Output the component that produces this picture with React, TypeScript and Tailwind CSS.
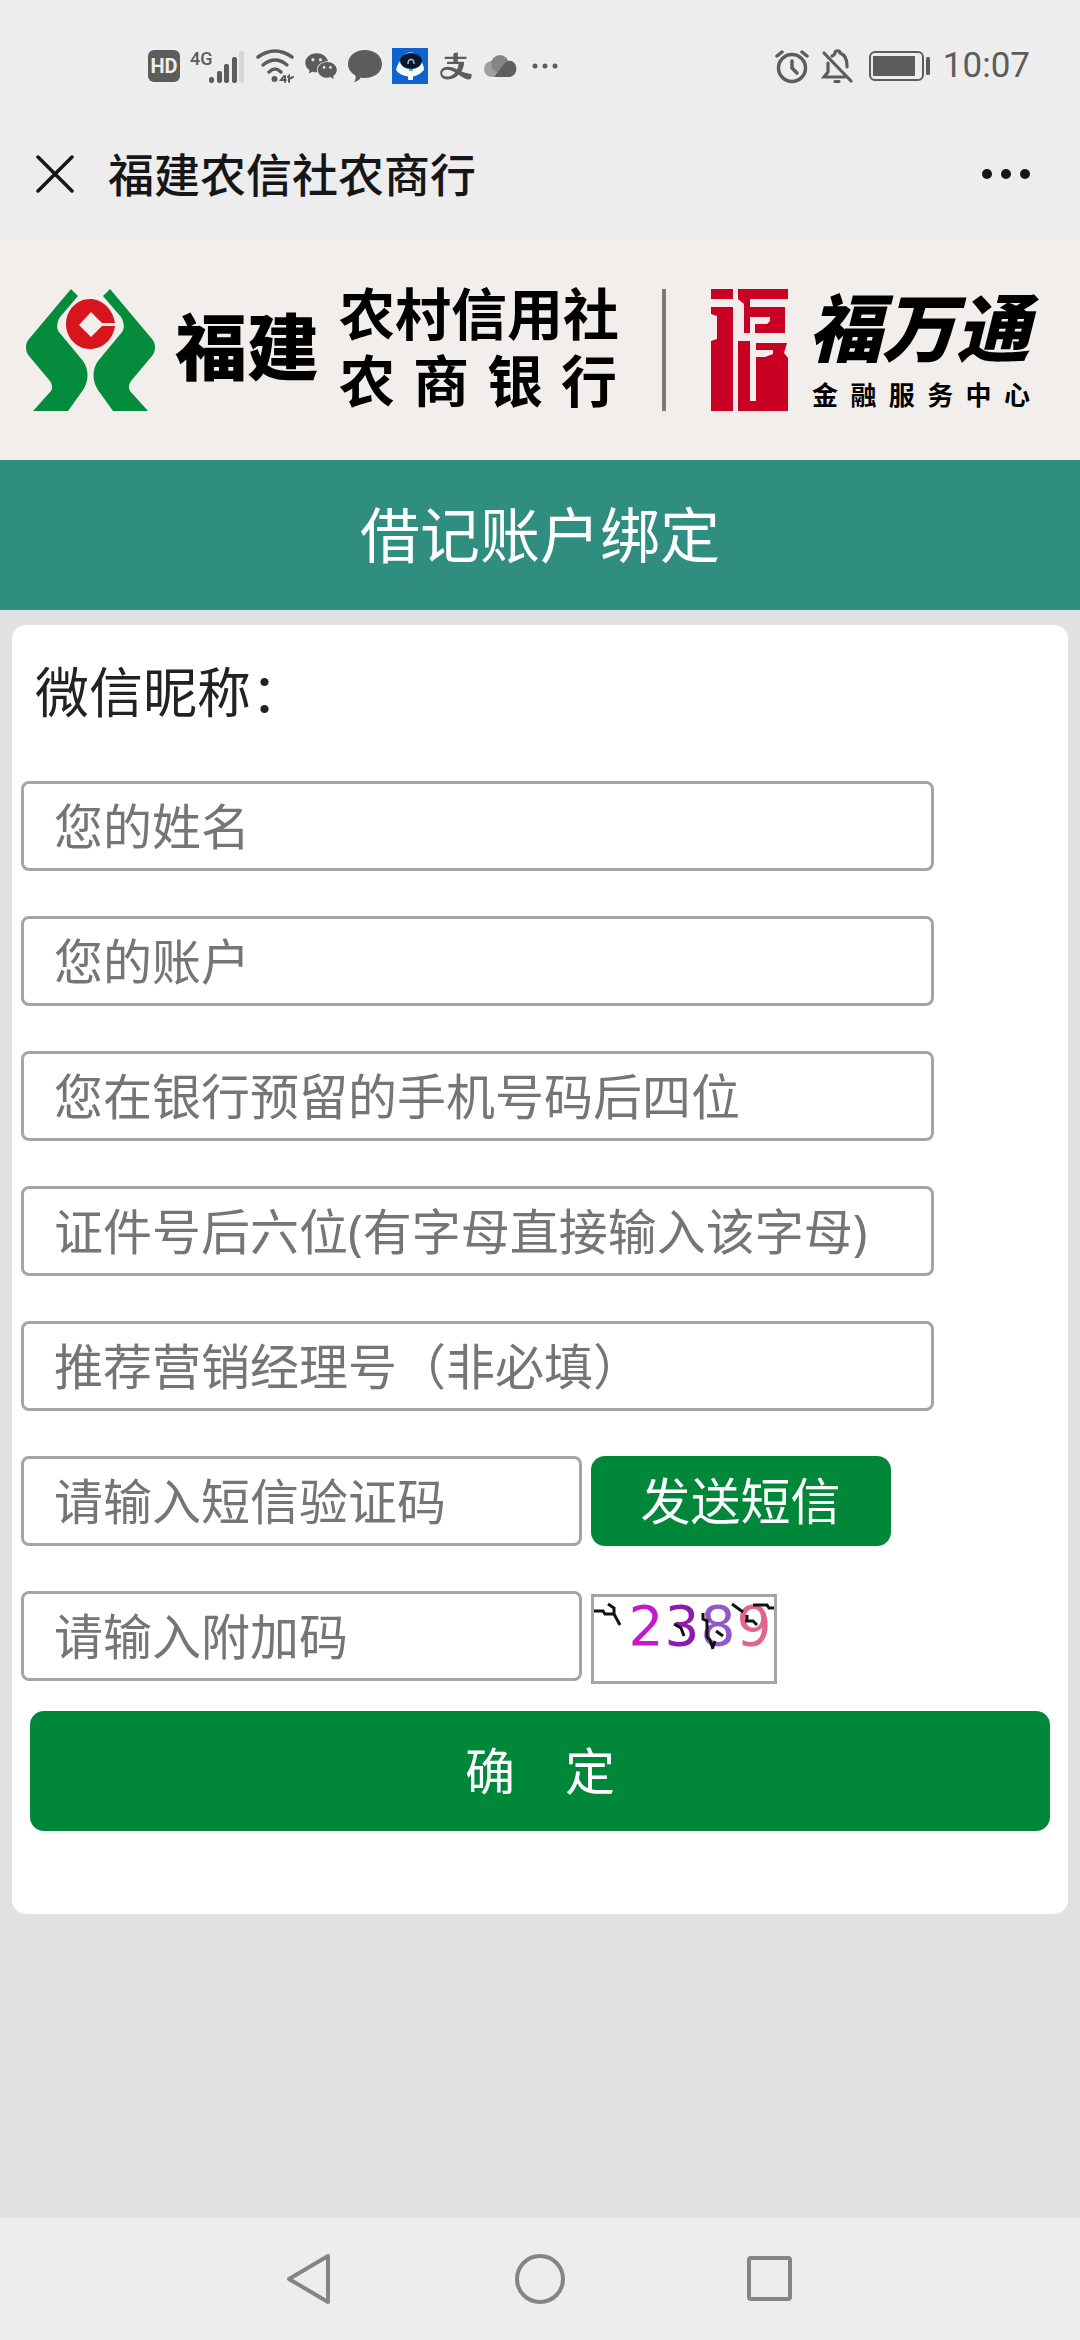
import { AiFillWechat, AiOutlineAlipay } from 'react-icons/ai'

const fields = [
  { id: 'name', placeholder: '您的姓名' },
  { id: 'account', placeholder: '您的账户' },
  { id: 'phone', placeholder: '您在银行预留的手机号码后四位' },
  { id: 'idcard', placeholder: '证件号后六位(有字母直接输入该字母)' },
  { id: 'manager', placeholder: '推荐营销经理号（非必填）' },
]

const inputClass =
  'h-[90px] rounded-lg border-[3px] border-[#a5a5a5] bg-white pl-[30px] pr-3 text-[49px] text-[#222] placeholder:text-[#757575] placeholder:opacity-100 outline-none'

function StatusBar() {
  return (
    <div className="flex h-[132px] items-center justify-between pl-[148px] pr-[50px] text-[#5c5c5c]">
      <div className="flex items-center gap-[10px]">
        <span className="flex h-8 w-8 items-center justify-center rounded-md bg-[#5c5c5c] font-['Roboto'] text-xl font-bold text-[#eee]">HD</span>
        {/* network type and signal */}
        <svg width="56" height="36" viewBox="0 0 56 36" fill="currentColor">
          <text x="0" y="17" fontFamily="Roboto" fontSize="18" fontWeight="500">4G</text>
          <rect x="19" y="29" width="5" height="6" rx="2" />
          <rect x="27" y="23" width="5" height="12" rx="2" />
          <rect x="34" y="16" width="5" height="19" rx="2" />
          <rect x="42" y="9" width="5" height="26" rx="2" />
          <rect x="49" y="3" width="5" height="32" rx="2" fill="#d6d6d6" />
        </svg>
        {/* wifi */}
        <svg width="38" height="36" viewBox="0 0 38 36" fill="none" stroke="currentColor" strokeWidth="3.5" strokeLinecap="round">
          <path d="M2 9 Q19 -3 36 9" />
          <path d="M7 17 Q19 7 31 17" />
          <path d="M13 24 Q19 18 25 24" />
          <circle cx="18.500" cy="31" r="3" fill="currentColor" stroke="none" />
          <path d="M28 28 l-3 4 h5 M29 28 v6 M33 34 v-6 l-1 1 M33 31 l4 -2" strokeWidth="2" />
        </svg>
        <AiFillWechat size={36} className="-mx-px" />
        {/* message bubble */}
        <svg width="34" height="34" viewBox="0 0 34 34" fill="currentColor">
          <path d="M17 1 C26 1 34 6.500 34 15 C34 23.500 26 29 17 29 C15 29 14 29 13 28.500 C11 31 9 32.500 6 33 C7.500 31 8 29 7.500 26.500 C3 24 0 20 0 15 C0 6.500 8 1 17 1 Z" />
        </svg>
        {/* robot app */}
        <svg width="36" height="36" viewBox="0 0 36 36">
          <rect width="36" height="36" fill="#0e63cf" />
          <path d="M9 12 C11 2 26 2 28 12 C31 15 32 19 32 22 C28 26 25 28 21 28.500 V32 H16 V28.500 C11 28 7 26 4 22 C5 18 6 15 9 12 Z" fill="#f4fbff" />
          <ellipse cx="19" cy="13" rx="11" ry="8" fill="#06182c" />
          <path d="M16 16 C16 10 22 10 22 16" fill="none" stroke="#9dbad5" strokeWidth="1.500" />
          <path d="M17 21 H21 V23 H17 Z" fill="#3fc6a8" />
        </svg>
        <AiOutlineAlipay size={36} />
        {/* cloud */}
        <svg width="34" height="24" viewBox="0 0 34 24">
          <circle cx="8" cy="15" r="8" fill="#a0a0a0" />
          <circle cx="16" cy="10" r="9" fill="#858585" />
          <path d="M10 23 L20 10 C27 2 34 10 32 17 C31 21 28 23 24 23 Z" fill="#5f5f5f" />
        </svg>
        <svg width="32" height="10" viewBox="0 0 32 10" fill="currentColor">
          <circle cx="7" cy="5" r="2.500" />
          <circle cx="17" cy="5" r="2.500" />
          <circle cx="27" cy="5" r="2.500" />
        </svg>
      </div>
      <div className="flex items-center gap-3">
        {/* alarm */}
        <svg width="34" height="36" viewBox="0 0 34 36" fill="none" stroke="currentColor" strokeWidth="3.5" strokeLinecap="round">
          <circle cx="17" cy="20" r="13.500" />
          <path d="M17 13 V20 L22 25" />
          <path d="M2 8 L7 4 M32 8 L27 4" />
        </svg>
        {/* muted bell */}
        <svg width="36" height="36" viewBox="0 0 36 36" fill="none" stroke="currentColor" strokeWidth="3.2" strokeLinecap="round">
          <path d="M3 5 L30 33" />
          <path d="M11 8 C13 7 14 6 14 5 C14 2 19 2 19 5 C24 7 26 11 26 17 V19" />
          <path d="M7 15 V24 L3 29 H24" />
          <path d="M14 33.500 H18" />
        </svg>
        {/* battery */}
        <svg width="62" height="30" viewBox="0 0 62 30">
          <rect x="1" y="1" width="53" height="28" rx="5" fill="none" stroke="currentColor" strokeWidth="2" />
          <rect x="4" y="5" width="42" height="20" fill="currentColor" />
          <rect x="57" y="6" width="4" height="18" rx="1.500" fill="currentColor" />
        </svg>
        <span className="font-['Roboto'] text-[35px]">10:07</span>
      </div>
    </div>
  )
}

function TitleBar() {
  return (
    <header className="flex h-[108px] items-center pb-6 pl-9 pr-[49px] text-[#161616]">
      <button type="button" aria-label="关闭">
        <svg width="38" height="38" viewBox="0 0 38 38" stroke="currentColor" strokeWidth="3.500" strokeLinecap="round">
          <path d="M2 2 L36 36 M36 2 L2 36" />
        </svg>
      </button>
      <h1 className="ml-[34px] flex-1 text-[46px] font-medium leading-[60px]">福建农信社农商行</h1>
      <button type="button" aria-label="更多">
        <svg width="50" height="12" viewBox="0 0 50 12" fill="currentColor">
          <circle cx="6" cy="6" r="5" />
          <circle cx="25" cy="6" r="5" />
          <circle cx="44" cy="6" r="5" />
        </svg>
      </button>
    </header>
  )
}

function SpreadText({ text }: { text: string }) {
  return (
    <div className="flex justify-between">
      {text.split('').map((char, i) => (
        <span key={i}>{char}</span>
      ))}
    </div>
  )
}

function Banner() {
  const hand = 'M45 0 L52 7 L34 28 C31 33 30 39 33 43 L57 72 C63 80 63 92 57 101 L42 122 H7 L25 102 C27 99 26 95 24 92 L3 67 C-1 62 -1 54 3 50 Z'
  return (
    <div className="flex h-[220px] items-center bg-[#f2eeeb] pl-[26px] font-['Liberation_Serif','Noto_Sans_CJK_SC',serif] text-black">
      <svg width="129" height="122" viewBox="0 0 129 122" className="shrink-0">
        <path d={hand} fill="#048b3c" />
        <path d={hand} fill="#048b3c" transform="translate(129 0) scale(-1 1)" />
        <path d="M89 34 C87 20 76 10 64 10 C51 10 40 21 40 35 C40 49 51 60 64 60 C76 60 87 51 89 37 H76 L65 48 L53 36 L65 23 L76 34 Z" fill="#d8151c" />
      </svg>
      <p className="ml-5 shrink-0 text-[72px] font-black leading-[80px]">福建</p>
      <div className="ml-5 flex w-[278px] shrink-0 flex-col text-[56px] font-bold leading-[67px]">
        <SpreadText text="农村信用社" />
        <SpreadText text="农商银行" />
      </div>
      <div className="ml-[45px] h-[122px] w-1 shrink-0 bg-[#7b7b78]" />
      <svg width="77" height="122" viewBox="0 0 77 122" fill="#c90024" className="ml-[45px] shrink-0">
        <path d="M0 0 H22 V10 H0 Z" />
        <path d="M0 18 H22 V122 H0 V52 L6 50 V27 L0 25 Z" />
        <path d="M27 0 H77 V10 H39 V18 H74 V44 H44 V35 H56 L59 32 V28 H39 V44 H33 V15 L27 10 Z" />
        <path d="M27 52 H39 V112 H45 V68 H54 L62 65 V61 H45 V54 H76 L73 64 L77 69 V122 H27 Z" />
      </svg>
      <div className="ml-5 flex w-[226px] shrink-0 flex-col gap-2">
        <p className="text-[74px] font-black italic leading-[84px]">福万通</p>
        <div className="px-1 text-[26px] font-bold leading-[31px]">
          <SpreadText text="金融服务中心" />
        </div>
      </div>
    </div>
  )
}

function Captcha() {
  return (
    <button type="button" aria-label="刷新附加码" className="relative mt-[3px] flex h-[90px] w-[186px] items-start gap-px border-[3px] border-[#a5a5a5] bg-white pl-[35px] font-['DejaVu_Sans'] text-[55px] leading-[58px]">
      <span className="text-[#c716cb]">2</span>
      <span className="text-[#8d1bab]">3</span>
      <span className="text-[#9158c8]">8</span>
      <span className="text-[#e0668f]">9</span>
      {/* noise strokes */}
      <svg className="absolute left-0 top-0" width="180" height="84" viewBox="0 0 180 84" fill="none" stroke="#111" strokeWidth="3">
        <path d="M0 14 H9 L11 17 H20 V11 L14 7 M20 17 L26 28" />
        <path d="M80 27 L87 31 L90 39" />
        <path d="M109 16 V22 L113 24 V40 L116 43 L119 52 M119 50 L121 44 M122 34 L129 39" />
        <path d="M138 7 L149 15 M151 24 H159 L163 28 M159 8 H173 L175 11 H180 M153 18 V24" />
      </svg>
    </button>
  )
}

function BindForm() {
  return (
    <form className="mx-3 mt-[15px] rounded-[14px] bg-white px-[9px] pb-[83px] pt-8" onSubmit={(e) => e.preventDefault()}>
      <p className="mb-[54px] pl-[14px] text-[54px] leading-[70px] text-[#222]">微信昵称：</p>
      <div className="flex flex-col gap-[45px]">
        {fields.map((field) => (
          <input key={field.id} id={field.id} aria-label={field.placeholder} placeholder={field.placeholder} className={`${inputClass} w-[88%]`} />
        ))}
        <div className="flex gap-[9px]">
          <input id="sms" aria-label="请输入短信验证码" placeholder="请输入短信验证码" className={`${inputClass} w-[54%]`} />
          <button type="button" className="h-[90px] w-[300px] rounded-[14px] bg-[#00873a] text-[50px] text-white">
            发送短信
          </button>
        </div>
        <div className="flex gap-[9px]">
          <input id="captcha" aria-label="请输入附加码" placeholder="请输入附加码" className={`${inputClass} w-[54%]`} />
          <Captcha />
        </div>
      </div>
      <div className="mt-[27px] px-[9px]">
        <button type="submit" className="h-[120px] w-full rounded-[14px] bg-[#00873a] text-[50px] text-white">
          确&emsp;定
        </button>
      </div>
    </form>
  )
}

function NavBar() {
  return (
    <nav className="mt-auto flex h-[122px] items-center justify-center gap-[180px] bg-[#ededed] text-[#858585]">
      <button type="button" aria-label="返回">
        <svg width="50" height="50" viewBox="0 0 50 50" fill="none" stroke="currentColor" strokeWidth="4" strokeLinejoin="round">
          <path d="M43 2 V48 L4 25 Z" />
        </svg>
      </button>
      <button type="button" aria-label="主页">
        <svg width="50" height="50" viewBox="0 0 50 50" fill="none" stroke="currentColor" strokeWidth="4">
          <circle cx="25" cy="25" r="23" />
        </svg>
      </button>
      <button type="button" aria-label="最近任务">
        <svg width="50" height="50" viewBox="0 0 50 50" fill="none" stroke="currentColor" strokeWidth="4">
          <rect x="4" y="4" width="41" height="41" rx="2" />
        </svg>
      </button>
    </nav>
  )
}

export default function App() {
  return (
    <div className="flex min-h-screen flex-col bg-[#e2e2e2] font-['Noto_Sans','Noto_Sans_CJK_SC',sans-serif]">
      <div className="bg-[#ededed]">
        <StatusBar />
        <TitleBar />
      </div>
      <Banner />
      <h2 className="flex h-[150px] items-center justify-center bg-[#308e80] text-[60px] text-white">借记账户绑定</h2>
      <BindForm />
      <NavBar />
    </div>
  )
}
